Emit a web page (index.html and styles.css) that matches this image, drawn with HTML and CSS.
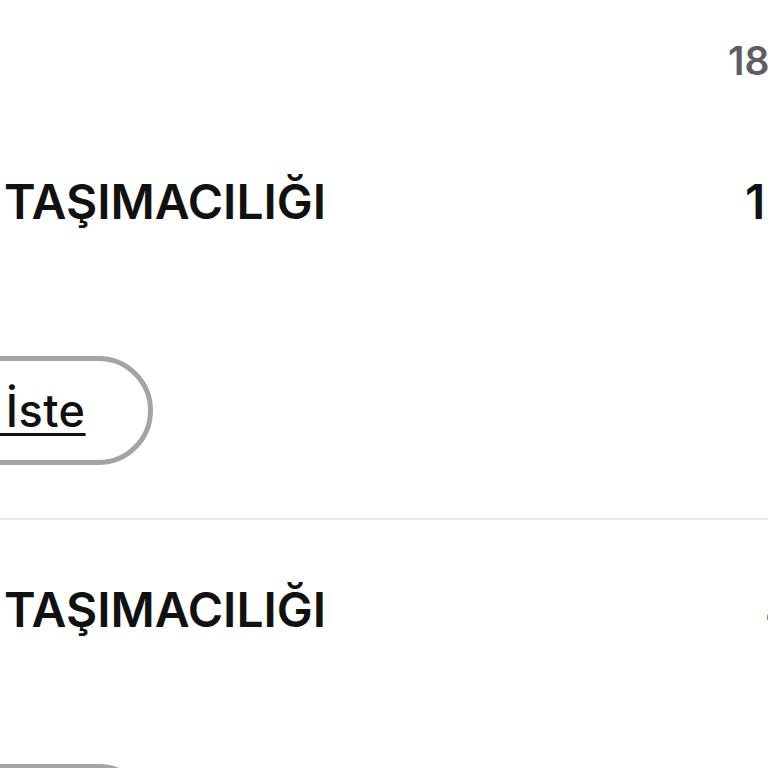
FILE: index.html
```html
<!DOCTYPE html>
<html lang="tr">
<head>
  <meta charset="UTF-8" />
  <title>Taşımacılık Hizmetleri</title>
  <link rel="stylesheet" href="styles.css">
</head>
<body>

  <div class="list">

    <!-- EN UST : SONUC SAYISI -->
    <div class="list-head">
      <span class="count">18</span>
    </div>

    <!-- HIZMET 1 -->
    <div class="item">
      <div class="item-row">
        <h2 class="item-title">TAŞIMACILIĞI</h2>
        <span class="price">1</span>
      </div>
      <a href="#" class="quote-btn">Teklif İste</a>
    </div>

    <!-- HIZMET 2 -->
    <div class="item">
      <div class="item-row">
        <h2 class="item-title">TAŞIMACILIĞI</h2>
        <span class="price price-cut">4</span>
      </div>
      <a href="#" class="quote-btn">Teklif İste</a>
    </div>

  </div>

</body>
</html>
```

FILE: styles.css
```css
/* RESET */
* {
  margin: 0;
  padding: 0;
  box-sizing: border-box;
}

body {
  font-family: Inter, "Noto Sans", sans-serif;
  background: #fff;
  color: #111;
  overflow: hidden;
  height: 768px;
}

/* LISTE */
.list {
  display: flex;
  flex-direction: column;
}

.list-head {
  display: flex;
  padding-top: 38px;
  height: 112px;
}

.count {
  margin-left: auto;
  width: 40px;
  white-space: nowrap;
  font-size: 39px;
  line-height: 46px;
  font-weight: 600;
  color: #5e5e62;
}

/* CARTE HIZMET */
.item {
  display: flex;
  flex-direction: column;
  align-items: flex-start;
  padding: 61px 0 53px;
  border-bottom: 2px solid #e8e8e8;
}

.item-row {
  display: flex;
  width: 100%;
  margin-bottom: 125px;
}

.item-title {
  font-size: 48px;
  line-height: 58px;
  font-weight: 600;
  padding-left: 4px;
  white-space: nowrap;
}

.price {
  margin-left: auto;
  width: 23px;
  white-space: nowrap;
  font-size: 48px;
  line-height: 58px;
  font-weight: 600;
}

.price-cut {
  width: 3px;
}

/* BOUTON */
.quote-btn {
  display: inline-block;
  margin-left: -192px;
  padding: 24px 62px 24px 60px;
  border: 5px solid #a3a3a8;
  border-radius: 60px;
  font-size: 45px;
  line-height: 51px;
  font-weight: 500;
  letter-spacing: 0.5px;
  color: #111;
  text-decoration: underline;
  text-decoration-thickness: 3px;
  text-underline-offset: 6px;
  white-space: nowrap;
}
```
